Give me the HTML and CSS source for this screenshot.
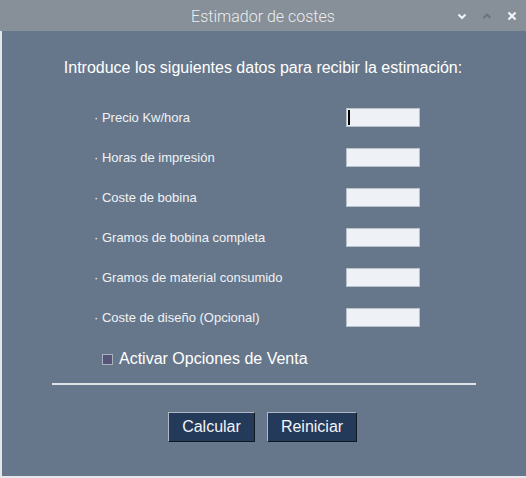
FILE: index.html
```html
<!DOCTYPE html>
<html>
<head>
<meta charset="utf-8">
<link rel="stylesheet" href="styles.css">
</head>
<body>
<div class="window">
  <div class="titlebar">
    <span class="title">Estimador de costes</span>
    <div class="controls">
      <svg class="ctl" width="12" height="12" viewBox="0 0 12 12"><path d="M2.5 4.5 L6 8 L9.5 4.5" fill="none" stroke="#f4f5f6" stroke-width="2"/></svg>
      <svg class="ctl" width="12" height="12" viewBox="0 0 12 12"><path d="M2.5 8 L6 4.5 L9.5 8" fill="none" stroke="#6d737b" stroke-width="2"/></svg>
      <svg class="ctl" width="12" height="12" viewBox="0 0 12 12"><path d="M2.5 2.5 L9.5 9.5 M9.5 2.5 L2.5 9.5" fill="none" stroke="#f4f5f6" stroke-width="2.2"/></svg>
    </div>
  </div>
  <div class="body">
    <p class="heading">Introduce los siguientes datos para recibir la estimación:</p>
    <div class="rows">
      <div class="row"><span class="label">· Precio Kw/hora</span><span class="entry focus"><span class="caret"></span></span></div>
      <div class="row"><span class="label">· Horas de impresión</span><span class="entry"></span></div>
      <div class="row"><span class="label">· Coste de bobina</span><span class="entry"></span></div>
      <div class="row"><span class="label">· Gramos de bobina completa</span><span class="entry"></span></div>
      <div class="row"><span class="label">· Gramos de material consumido</span><span class="entry"></span></div>
      <div class="row"><span class="label">· Coste de diseño (Opcional)</span><span class="entry"></span></div>
    </div>
    <div class="check"><span class="box"></span><span class="checklabel">Activar Opciones de Venta</span></div>
    <div class="sep"></div>
    <div class="buttons">
      <span class="btn btn1">Calcular</span>
      <span class="btn btn2">Reiniciar</span>
    </div>
  </div>
</div>
</body>
</html>
```
FILE: styles.css
```css
html, body { margin: 0; padding: 0; }
body { width: 526px; height: 478px; overflow: hidden; background: #67778b; font-family: "Liberation Sans", Arial, sans-serif; }
.window { width: 526px; height: 478px; display: flex; flex-direction: column; }
.titlebar { height: 31px; background: #878f98; position: relative; display: flex; align-items: center; justify-content: center; box-sizing: border-box; padding-top: 2px; }
.title { color: #eceeef; font-family: "Roboto", "Liberation Sans", sans-serif; font-size: 16px; font-weight: 300; margin-left: 0; }
.controls { position: absolute; right: 8px; top: 10px; display: flex; gap: 13px; }
.ctl { display: block; }
.body { flex: 1; background: #67778b; border-left: 2px solid #e3e6ea; border-bottom: 2px solid #e3e6ea; display: flex; flex-direction: column; }
.heading { margin: 27px 0 0 0; text-align: center; color: #ffffff; font-size: 16px; line-height: 19px; padding-right: 2px; }
.rows { margin-top: 31px; display: flex; flex-direction: column; gap: 21px; padding-left: 92px; }
.row { display: flex; align-items: center; height: 19px; }
.label { width: 252px; color: #f0f2f4; font-size: 13px; }
.entry { width: 74px; height: 19px; box-sizing: border-box; background: #eef2f7; border: 1px solid #b9c1cb; display: flex; align-items: center; padding-left: 1px; }
.caret { width: 2px; height: 15px; background: #000; }
.check { margin-top: 22px; display: flex; align-items: center; padding-left: 100px; height: 20px; }
.box { width: 11px; height: 11px; box-sizing: border-box; background: #55557a; border: 1px solid #aab0bc; margin-right: 6px; }
.checklabel { color: #ffffff; font-size: 16px; }
.sep { margin: 14px 0 0 50px; width: 424px; height: 2px; background: #dfe3e8; }
.buttons { margin-top: 27px; display: flex; padding-left: 166px; gap: 12px; }
.btn { height: 30px; box-sizing: border-box; background: #243a5a; color: #f2f4f6; font-size: 16px; display: flex; align-items: center; justify-content: center; border-top: 1px solid #b0b8c4; border-left: 1px solid #b0b8c4; border-right: 1px solid #101820; border-bottom: 1px solid #101820; }
.btn1 { width: 87px; }
.btn2 { width: 90px; }
```
